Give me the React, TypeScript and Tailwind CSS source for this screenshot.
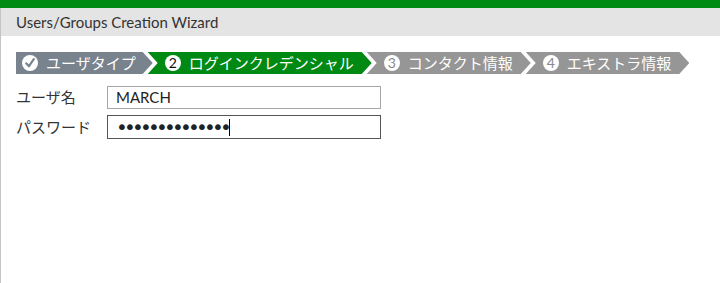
const font = "font-['Lato','Noto_Sans_CJK_JP',sans-serif]";

type Step = {
    label: string;
    num?: number;
    done?: boolean;
    active?: boolean;
    first?: boolean;
};

const steps: Step[] = [
    { label: "ユーザタイプ", done: true, first: true },
    { label: "ログインクレデンシャル", num: 2, active: true },
    { label: "コンタクト情報", num: 3 },
    { label: "エキストラ情報", num: 4 },
];

function StepBadge({ step }: { step: Step }) {
    if (step.done) {
        return (
            <svg width="16" height="16" viewBox="0 0 16 16" className="shrink-0">
                <circle cx="8" cy="8" r="8" fill="#ffffff" />
                <path d="M4.2 8.3 L7 11.2 L11.8 4.2" fill="none" stroke="#79838e" strokeWidth="2.2" strokeLinecap="round" strokeLinejoin="round" />
            </svg>
        );
    }
    return (
        <div
            className={`flex h-4 w-4 shrink-0 items-center justify-center rounded-full bg-white text-[14px] leading-none ${
                step.active ? "text-[#111]" : "text-[#888]"
            }`}
        >
            {step.num}
        </div>
    );
}

function StepItem({ step }: { step: Step }) {
    const bg = step.active ? "bg-[#008a14]" : step.first ? "bg-[#79838e]" : "bg-[#969696]";
    const shape = step.first
        ? "pl-[6px] pr-[17px] [clip-path:polygon(0_0,calc(100%_-_10px)_0,100%_50%,calc(100%_-_10px)_100%,0_100%)]"
        : "ml-[-5px] pl-[17px] pr-[18px] [clip-path:polygon(0_0,calc(100%_-_10px)_0,100%_50%,calc(100%_-_10px)_100%,0_100%,10px_50%)]";
    return (
        <div className={`flex h-[22px] items-center gap-2 text-[15px] text-white ${bg} ${shape}`}>
            <StepBadge step={step} />
            <span className="whitespace-nowrap leading-none">{step.label}</span>
        </div>
    );
}

export default function App() {
    return (
        <div className={`flex h-[283px] w-[720px] flex-col bg-white text-[#333] ${font}`}>
            <div className="h-[8px] bg-[#008a14]" />
            <div className="flex flex-1 flex-col border-l border-[#c4c4c4]">
                <div className="flex h-[28px] items-center bg-[#e4e4e4] pl-[15px] text-[15px] text-[#333]">
                    Users/Groups Creation Wizard
                </div>
                <div className="mt-[16px] flex pl-[15px]">
                    {steps.map((s) => (
                        <StepItem key={s.label} step={s} />
                    ))}
                </div>
                <div className="mt-[12px] flex flex-col gap-[6px] pl-[15px]">
                    <div className="flex items-center">
                        <div className="w-[91px] text-[15px]">ユーザ名</div>
                        <div className="flex h-[23px] w-[274px] items-center border border-[#a6a6a6] px-[8px] text-[15px] text-[#222]">
                            MARCH
                        </div>
                    </div>
                    <div className="flex items-center">
                        <div className="w-[91px] text-[15px]">パスワード</div>
                        <div className="flex h-[24px] w-[274px] items-center border border-[#555] px-[8px] text-[#222]">
                            <span className="font-['DejaVu_Sans',sans-serif] text-[20px] leading-none tracking-[-3.8px]">
                                ••••••••••••••
                            </span>
                            <span className="ml-[1px] h-[17px] w-px bg-black" />
                        </div>
                    </div>
                </div>
            </div>
        </div>
    );
}
